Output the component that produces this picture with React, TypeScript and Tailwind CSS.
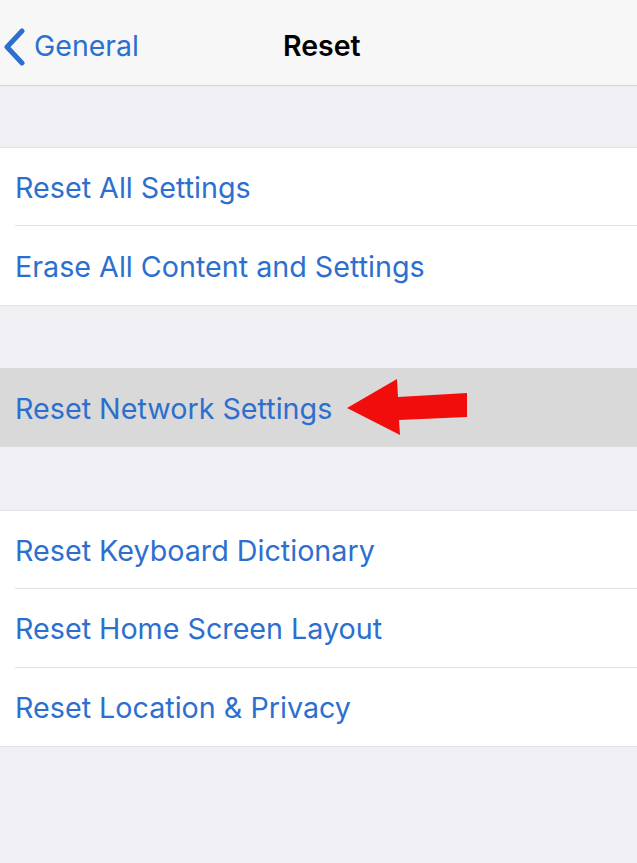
const font = { fontFamily: 'Inter, "Noto Sans", sans-serif' };

function Row({ label, last, active, h = 78 }: { label: string; last?: boolean; active?: boolean; h?: number }) {
    return (
        <div className={`relative pl-[15px] ${active ? 'bg-[#d9d9d9]' : 'bg-white'}`}>
            <div
                className={`flex items-center pt-[2px] text-[28.7px] text-[#2c6fcf] ${
                    last ? '' : 'border-b border-[#e3e3e6]'
                }`}
                style={{ height: h }}
            >
                {label}
            </div>
        </div>
    );
}

function Group({ rows }: { rows: string[] }) {
    return (
        <div className="border-y border-[#e2e2e6]">
            {rows.map((r, i) => (
                <Row key={r} label={r} last={i === rows.length - 1} h={i === 1 ? 79 : 78} />
            ))}
        </div>
    );
}

export default function App() {
    return (
        <div className="min-h-[863px] w-[637px] bg-[#efeff4]" style={font}>
            <div className="flex h-[86px] items-center border-b border-[#d4d4d8] bg-[#f7f7f8] pt-[8px]">
                <div className="flex w-[300px] items-center">
                    <svg width="26" height="38" viewBox="0 0 26 38" className="ml-[1px]">
                        <path
                            d="M21 3 L6 19 L21 35"
                            fill="none"
                            stroke="#2c6fcf"
                            strokeWidth="5"
                            strokeLinecap="round"
                            strokeLinejoin="round"
                        />
                    </svg>
                    <span className="ml-[7px] text-[28.5px] text-[#2c6fcf]">General</span>
                </div>
                <span className="ml-[-17px] text-[28.5px] font-semibold text-black">Reset</span>
            </div>

            <div className="h-[61px]" />
            <Group rows={['Reset All Settings', 'Erase All Content and Settings']} />

            <div className="h-[62px]" />
            <div className="relative">
                <Row label="Reset Network Settings" last active h={79} />
                <svg
                    className="absolute left-[340px] top-[8px]"
                    width="135"
                    height="64"
                    viewBox="0 0 135 64"
                >
                    <polygon
                        points="7,32 57,3 58,21 127,17 127,41 59,44 60,59"
                        fill="#f20d0d"
                    />
                </svg>
            </div>

            <div className="h-[63px]" />
            <Group
                rows={['Reset Keyboard Dictionary', 'Reset Home Screen Layout', 'Reset Location & Privacy']}
            />
        </div>
    );
}
